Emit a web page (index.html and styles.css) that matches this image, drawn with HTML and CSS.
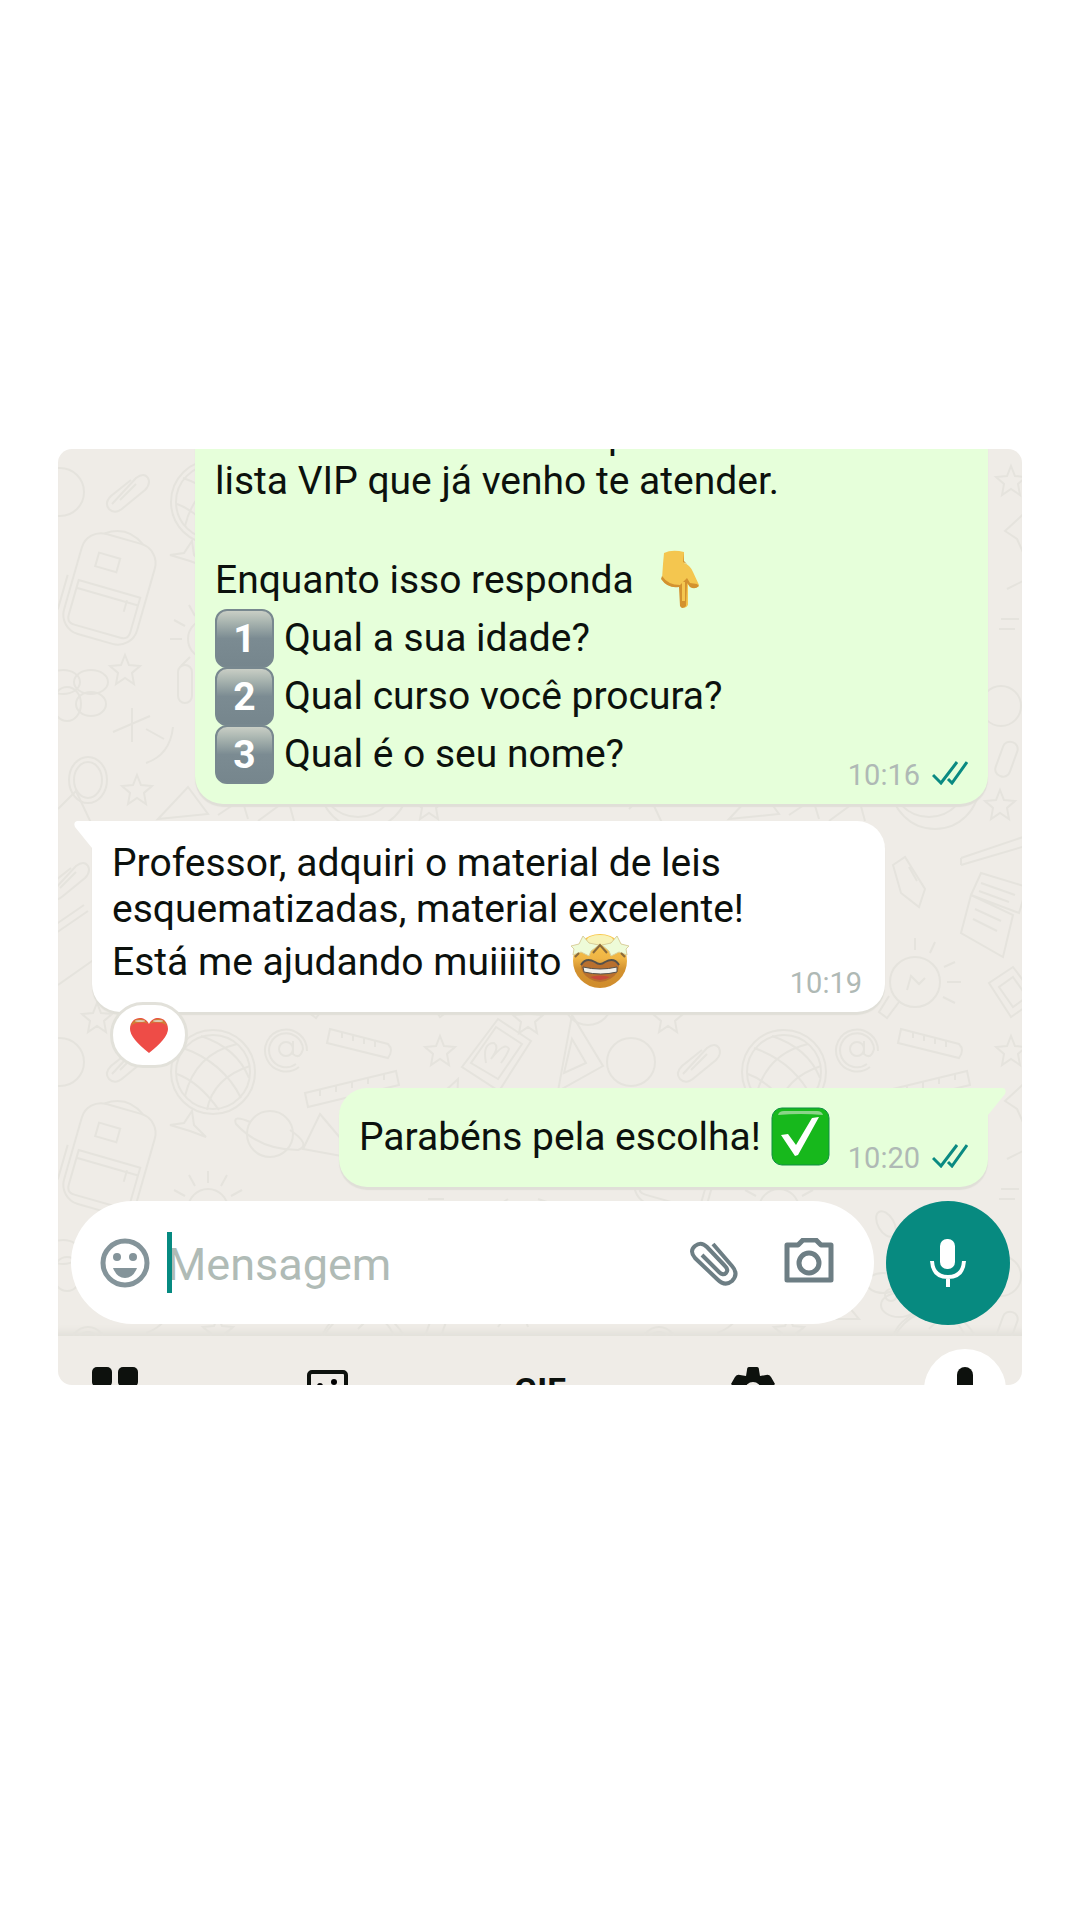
FILE: index.html
```html
<!DOCTYPE html>
<html lang="pt-BR">
<head>
<meta charset="utf-8">
<meta name="viewport" content="width=device-width, initial-scale=1">
<title>Conversa</title>
<link rel="stylesheet" href="styles.css">
</head>
<body>
<main class="panel">
  <section class="chat">
    <svg class="wallpaper" aria-hidden="true">
      <defs>
        <path id="star" d="M0-15 4-5 15-4 7 3 9 14 0 8-9 14-7 3-15-4-4-5Z"/>
        <path id="clip" d="M-16 12 8-14q8-6 12 0 3 6-3 12L-5 16q-8 7-14 1-5-6 2-13L3-12M-8 8 8-8"/>
        <g id="doodles">
          <g transform="translate(155 53)"><circle r="42"/><circle r="37"/><path d="M-30-24Q10-10 28 26M-12-36Q24-24 36 6M-36 2Q-14 10 6 38M-28 24Q-18-18 24-28M-6 38Q0 6 37-6"/></g>
          <g transform="translate(228 30)"><circle r="7"/><path d="M7-8V5q7 6 10-5A17 17 0 1 0 10 15M13 18A21 21 0 1 1 21 2"/></g>
          <path d="M272 10 330 25q6 6 0 14L269 24ZM284 13v6M295 16v6M306 19v6M317 22v6"/>
          <use href="#star" x="382" y="32"/>
          <path d="M440 0 473 22 441 72 404 48ZM438 8 464 25 440 60 413 44ZM428 44q-4-20 8-20 6 4-3 16 14-18 18-10-2 6-8 14"/>
          <path d="M514-4 545 47 500 72ZM514 20 528 44 506 54Z"/>
          <circle cx="2" cy="43" r="24"/>
          <use href="#clip" x="70" y="43"/>
          <path d="M247 74 338 52 341 66 250 88ZM262 71v6M278 67v6M294 63v6M310 59v6M326 55v6"/>
          <g transform="translate(212 115)"><circle r="23"/><path d="M-20-12q-18-8-14 2 24 26 62 26 14-5-8-20"/></g>
          <g transform="translate(52 138) rotate(16)"><rect x="-38" y="-50" width="76" height="104" rx="20"/><path d="M-32 2V38q0 8 8 8H24q8 0 8-8V2ZM-32 10H32M-20-30H2v14H-20ZM20 8v12M-20-50q20-14 40 0M-44 0V36"/></g>
          <path d="M112 106 126 104 134 92 136 106 148 118 132 112Z"/>
          <g transform="translate(150 190)"><circle r="20"/><path d="M0-26V-38M13-23 19-34M23-13 34-19M26 0H38M-13-23-19-34M-23-13-34-19M-26 0H-38M0 26V38M18 18 27 27M-18 18-27 27"/></g>
          <path d="M262 95 300 140 245 130Z"/>
          <use href="#star" x="67" y="221"/>
          <g transform="translate(19 241)"><ellipse cx="-14" cy="-8" rx="17" ry="12"/><ellipse cx="14" cy="-8" rx="17" ry="12"/><ellipse cx="-10" cy="14" rx="14" ry="17"/><ellipse cx="14" cy="14" rx="15" ry="12"/></g>
          <rect x="120" y="216" width="14" height="38" rx="7"/>
          <path d="M74 259V293M55 283 92 267M88 280 106 290M115 278Q112 306 88 314"/>
          <ellipse cx="30" cy="331" rx="19" ry="23"/><ellipse cx="30" cy="331" rx="14" ry="18"/>
          <use href="#star" x="79" y="341"/>
          <path d="M100 370 130 338 150 365ZM160 366 184 350 190 370M0 360 18 342 34 376M200 372 230 350 236 372"/>
          <use href="#clip" x="10" y="431"/>
          <path d="M-6 478 26 456M-2 484 30 462M0 536 44 505"/>
          <use href="#star" x="39" y="569"/>
          <circle cx="306" cy="336" r="44"/><circle cx="300" cy="330" r="38"/>
          <path d="M332 409 400 386M332 416 400 396M332 409v7"/>
          <path d="M264 416 276 408 296 440 290 458 272 444ZM280 418 288 432"/>
          <path d="M352 424 398 438 390 464 342 446ZM342 446 384 466 374 508 332 484ZM352 434 386 446M350 442 380 453M346 460 372 472M344 470 368 482"/>
          <g transform="translate(286 533)"><circle r="25"/><path d="M-16 20-28 36-36 30-26 14M-8 8-4-6 4 2 10-4M0-32V-44M15-29 20-40M29-15 40-20M32 0H46M28 15 40 21"/></g>
          <path d="M384 518 408 550 382 568 360 534ZM384 528 398 548 384 558 370 538Z"/>
          <use href="#star" x="371" y="356"/>
          <path d="M376 82 400 60 398 112 388 90ZM398 130 378 140M372 170H390M370 180H386"/>
          <circle cx="372" cy="257" r="20"/>
          <rect x="370" y="292" width="15" height="36" rx="7" transform="rotate(20 377 310)"/>
          <ellipse cx="257" cy="205" rx="14" ry="8" transform="rotate(60 257 205)"/>
          <g transform="translate(262 276)"><circle r="6"/><ellipse cx="-8" cy="-12" rx="16" ry="10"/><ellipse cx="8" cy="10" rx="18" ry="12"/></g>
          <use href="#star" x="190" y="200"/><use href="#star" x="335" y="205"/>
          <path d="M190 300 210 276 230 300ZM300 310 330 280M420 200 450 180M480 180 510 190M440 308 460 280 470 308M510 300 540 284"/>
          <use href="#star" x="160" y="312"/><use href="#star" x="470" y="570"/>
          <circle cx="530" cy="552" r="24"/>
        </g>
      </defs>
      <use href="#doodles"/><use href="#doodles" x="571"/><use href="#doodles" x="-571"/>
      <use href="#doodles" y="570"/><use href="#doodles" x="571" y="570"/><use href="#doodles" x="-571" y="570"/>
    </svg>

    <div class="messages">
      <article class="bubble bubble--out bubble--wide">
        <div class="bubble__text">
          <p class="line line--cut">p</p>
          <p class="line">lista VIP que já venho te atender.</p>
          <p class="line"></p>
          <p class="line line--emoji line--spaced">Enquanto isso responda
            <svg class="emoji" viewBox="0 0 59 59" role="img" aria-label="apontando para baixo">
              <path d="M14 3Q22-1 34 2L34 13Q40 15 43 22L49 35Q47 39 40 37L38 32V55Q35 60 31 56L30 37Q17 38 12 29L13 14Z" fill="#f4c64f"/>
              <path d="M12 26q6 9 18 9l7-7 3 5 7 1 2 2q-4 4-9 1l-3-4-1 23q-4 4-6 0l-1-19q-11 2-18-8ZM34 3v8l3 3-4-2Z" fill="#d3922f"/>
              <path d="M32 32h3v19h-3Z" fill="#f4c64f"/>
            </svg>
          </p>
          <p class="line line--emoji line--option"><span class="keycap">1</span>Qual a sua idade?</p>
          <p class="line line--emoji line--option"><span class="keycap">2</span>Qual curso você procura?</p>
          <p class="line line--emoji line--option"><span class="keycap">3</span>Qual é o seu nome?</p>
        </div>
        <div class="meta"><time>10:16</time>
          <svg class="ticks" viewBox="0 0 36 24" role="img" aria-label="lida"><path d="M1 14 9 22 25 1M16 18 20 22 35 1"/></svg>
        </div>
      </article>

      <article class="bubble bubble--in bubble--wide">
        <svg class="tail tail--left" viewBox="0 0 18 28" aria-hidden="true"><path d="M18 0H3Q-1 1 1 6L18 27Z"/></svg>
        <div class="bubble__text">
          <p class="line">Professor, adquiri o material de leis</p>
          <p class="line">esquematizadas, material excelente!</p>
          <p class="line line--emoji">Está me ajudando muiiiito
            <svg class="emoji" viewBox="0 0 59 59" role="img" aria-label="rosto com olhos de estrela">
              <defs><linearGradient id="face" x1="0" y1="0" x2="0" y2="1"><stop offset="0" stop-color="#f9c94c"/><stop offset=".45" stop-color="#f0b545"/><stop offset=".65" stop-color="#d3922f"/><stop offset="1" stop-color="#d08c2c"/></linearGradient></defs>
              <circle cx="29" cy="29" r="27" fill="url(#face)"/>
              <ellipse cx="29" cy="8" rx="13" ry="5" fill="#f7f3b8"/>
              <path d="M12 4 18 11 28 13 20 19 18 24 10 20 2 23 3 17 0 14 8 12ZM46 4 40 11 31 13 38 19 40 24 48 20 56 23 55 17 58 14 50 12Z" fill="#eefbd8" stroke="#d9cf9c"/>
              <path d="M22 21 29 13 36 21M4 25l4-4M54 25l-4-4" fill="none" stroke="#8a6a3c" stroke-width="2"/>
              <path d="M10 33Q15 25 24 30 29 34 34 30 43 25 48 33 48 42 39 47 29 53 19 47 10 42 10 33Z" fill="#b9702e"/>
              <path d="M10 33Q15 25 24 30 29 34 34 30 43 25 48 33" fill="none" stroke="#55514a" stroke-width="2"/>
              <path d="M12 35q17 4 34 0v5q-16 4-33 0Z" fill="#f2f1eb" stroke="#55514a"/>
              <path d="M19 45q10-3 20 0-10 6-20 0Z" fill="#c8493a"/>
            </svg>
          </p>
        </div>
        <div class="meta"><time>10:19</time></div>
        <button class="reaction" type="button" aria-label="Reação: coração">
          <svg viewBox="0 0 40 37" aria-hidden="true">
            <path d="M20 36Q1 21 1 12C1 0 15-3 20 7 25-3 39 0 39 12Q39 21 20 36Z" fill="#ee4c47"/>
            <path d="M2 10C3 0 15-1 19 7 15 5 8 5 3 8ZM38 10C37 0 25-1 21 7 25 5 32 5 37 8Z" fill="#cf7f34"/>
            <ellipse cx="11" cy="4" rx="5" ry="1" fill="#dcc9b0"/><ellipse cx="29" cy="4" rx="5" ry="1" fill="#dcc9b0"/>
          </svg>
        </button>
      </article>

      <article class="bubble bubble--out bubble--reply">
        <svg class="tail tail--right" viewBox="0 0 18 28" aria-hidden="true"><path d="M0 0H15Q19 1 17 6L0 27Z"/></svg>
        <div class="bubble__text">
          <p class="line line--emoji">Parabéns pela escolha!
            <svg class="emoji" viewBox="0 0 59 59" role="img" aria-label="marca de seleção">
              <rect x="1" y="1" width="57" height="57" rx="10" fill="#17b81c" stroke="#118f45"/>
              <path d="M7 8q1-4 6-4h33q5 0 6 4-22-2-45 0Z" fill="#8bd489"/>
              <path d="M10 28 17 27 25 38 41 11 48 10 27 48 24 49Z" fill="#fff"/>
            </svg>
          </p>
        </div>
        <div class="meta"><time>10:20</time>
          <svg class="ticks" viewBox="0 0 36 24" role="img" aria-label="lida"><path d="M1 14 9 22 25 1M16 18 20 22 35 1"/></svg>
        </div>
      </article>
    </div>

    <form class="composer">
      <div class="composer__box">
        <button class="icon" type="button" aria-label="Emojis">
          <svg viewBox="0 0 50 50"><circle cx="25" cy="25" r="22" fill="none" stroke="#84949a" stroke-width="5"/><g fill="#84949a"><circle cx="17" cy="19" r="4"/><circle cx="33" cy="19" r="4"/><path d="M13 30H37Q33 40 25 40T13 30Z"/></g></svg>
        </button>
        <div class="field"><input type="text" placeholder="Mensagem" aria-label="Mensagem"><span class="caret"></span></div>
        <button class="icon" type="button" aria-label="Anexar">
          <svg viewBox="0 0 50 50" fill="none" stroke="#6d7e84" stroke-width="4"><path d="M13 17 30 34Q34 38 37 35 40 32 36 28L18 9Q12 3 6 8 0 13 6 20L28 41Q36 49 43 43 50 36 43 28L24 6"/></svg>
        </button>
        <button class="icon" type="button" aria-label="Câmera">
          <svg viewBox="0 0 50 50" fill="none" stroke="#6d7e84" stroke-width="5" stroke-linejoin="round"><path d="M3 7H14L19 2H32L37 7H47V42H3Z"/><circle cx="25" cy="25" r="10"/></svg>
        </button>
      </div>
      <button class="mic" type="button" aria-label="Gravar áudio">
        <svg viewBox="0 0 36 48"><rect x="10" y="0" width="15" height="30" rx="7" fill="#fff"/><path d="M2 22Q3 38 18 38T34 22M18 38V48" fill="none" stroke="#fff" stroke-width="4"/></svg>
      </button>
    </form>
  </section>

  <nav class="toolbar" aria-label="Teclado">
    <button type="button" aria-label="Menu"><svg width="46" height="46" viewBox="0 0 46 46" fill="#0d110d"><rect width="20" height="20" rx="5"/><rect x="26" width="20" height="20" rx="5"/><rect y="26" width="20" height="20" rx="5"/><rect x="26" y="26" width="20" height="20" rx="5"/></svg></button>
    <button type="button" aria-label="Figurinhas"><svg width="42" height="44" viewBox="0 0 42 44"><rect x="2" y="5" width="37" height="37" rx="3" fill="none" stroke="#0d110d" stroke-width="4"/><circle cx="13" cy="19" r="3"/><circle cx="27" cy="15" r="3"/></svg></button>
    <button class="toolbar__gif" type="button">GIF</button>
    <button type="button" aria-label="Configurações"><svg width="44" height="44" viewBox="0 0 44 44"><path d="M18 0H26Q28 0 28 3L29 9 35 8Q38 7 40 10L44 17 38 23 44 29 36 40 29 36 27 44H17L15 36 8 40 0 29 6 23 0 17 4 10Q6 7 9 8L15 9 16 3Q16 0 18 0Z" fill="#0d110d"/><circle cx="22" cy="23" r="8" fill="#efece7"/></svg></button>
    <button class="toolbar__voice" type="button" aria-label="Digitação por voz"><svg width="16" height="44" viewBox="0 0 16 44"><rect width="16" height="36" rx="8" fill="#0d110d"/></svg></button>
  </nav>
</main>
</body>
</html>
```
FILE: styles.css
```css
* {
  box-sizing: border-box;
}

body {
  margin: 0;
  padding: 449px 58px 0;
  background: #fff;
  color: #0c110d;
  font: 39px/46px Roboto, sans-serif;
}

button {
  padding: 0;
  border: 0;
  background: none;
  color: inherit;
  font: inherit;
}

svg {
  display: block;
}

.panel {
  overflow: hidden;
  border-radius: 14px;
  background: #efece7;
}

.chat {
  position: relative;
  overflow: hidden;
  box-shadow: inset 0 -10px 6px -5px #e3e1db;
}

.wallpaper {
  position: absolute;
  inset: 0;
  width: 100%;
  height: 100%;
  fill: none;
  stroke: #e5e3dd;
  stroke-width: 2;
}

.messages {
  position: relative;
  display: flex;
  flex-direction: column;
  gap: 17px;
  margin-top: -37px;
  padding: 0 34px 14px;
}

.bubble {
  position: relative;
  display: flex;
  align-items: flex-end;
  justify-content: space-between;
  gap: 18px;
  padding: 19px 20px 12px;
  border-radius: 28px;
  box-shadow: 0 3px 1px #e0dfd8;
}

.bubble--wide {
  width: calc(100% - 103px);
}

.bubble--out {
  align-self: flex-end;
  background: #e6ffda;
}

.bubble--in {
  align-self: flex-start;
  padding-right: 23px;
  border-top-left-radius: 0;
  background: #fff;
}

.bubble--out:first-child {
  padding-top: 0;
}

.bubble--reply {
  margin-top: 59px;
  border-top-right-radius: 0;
}

.bubble__text {
  padding-bottom: 9px;
}

.line {
  min-height: 46px;
  margin: 0;
}

.line--emoji {
  display: flex;
  align-items: center;
  gap: 10px;
  height: 59px;
}

.line--spaced {
  gap: 16px;
}

.line--option {
  height: 58px;
}

.line--cut {
  padding-left: 393px;
}

.emoji {
  flex: none;
  width: 59px;
  height: 59px;
}

.keycap {
  width: 59px;
  height: 59px;
  border: 2px solid #78888f;
  border-radius: 12px;
  background: linear-gradient(#c9cec5, #a9b5b0 20%, #7b8b92 50%, #76868d);
  color: #fff;
  font-weight: 700;
  line-height: 56px;
  text-align: center;
}

.meta {
  display: flex;
  align-items: center;
  gap: 12px;
  color: #afb9b5;
  font-size: 29px;
  line-height: 34px;
}

.ticks {
  width: 36px;
  height: 24px;
  margin-bottom: 4px;
  fill: none;
  stroke: #0a8a82;
  stroke-width: 3;
}

.tail {
  position: absolute;
  top: 0;
  width: 18px;
  height: 28px;
}

.tail--left {
  right: 100%;
  fill: #fff;
}

.tail--right {
  left: 100%;
  fill: #e6ffda;
}

.reaction {
  position: absolute;
  top: 181px;
  left: 18px;
  display: grid;
  place-items: center;
  width: 78px;
  height: 66px;
  border: 3px solid #e2e1da;
  border-radius: 33px;
  background: #fff;
}

.reaction svg {
  width: 40px;
  height: 37px;
}

.composer {
  position: relative;
  display: flex;
  gap: 12px;
  padding: 0 12px 11px 13px;
}

.composer__box {
  display: flex;
  flex: 1;
  align-items: center;
  gap: 45px;
  min-width: 0;
  height: 123px;
  padding: 0 40px 0 29px;
  border-radius: 62px;
  background: #fff;
}

.icon {
  flex: none;
  width: 50px;
  height: 50px;
}

.field {
  position: relative;
  flex: 1;
  min-width: 0;
  margin-left: -28px;
}

.field input {
  display: block;
  width: 100%;
  height: 61px;
  padding: 4px 0 0;
  border: 0;
  outline: 0;
  background: none;
  color: inherit;
  font: 45px/52px Roboto, sans-serif;
}

.field input::placeholder {
  color: #b0bbb6;
  opacity: 1;
}

.caret {
  position: absolute;
  top: 0;
  left: 0;
  width: 5px;
  height: 61px;
  background: #068a81;
}

.mic {
  display: grid;
  place-items: center;
  width: 124px;
  height: 124px;
  border-radius: 50%;
  background: #078a80;
}

.mic svg {
  width: 36px;
  height: 48px;
}

.toolbar {
  display: flex;
  align-items: flex-start;
  justify-content: space-between;
  height: 49px;
  padding: 13px 16px 0;
  overflow: hidden;
}

.toolbar > button {
  display: flex;
  justify-content: center;
  width: 82px;
  padding-top: 18px;
}

.toolbar > .toolbar__gif {
  font-weight: 700;
  font-size: 34px;
}

.toolbar > .toolbar__voice {
  height: 82px;
  border-radius: 50%;
  background: #fff;
}
```
